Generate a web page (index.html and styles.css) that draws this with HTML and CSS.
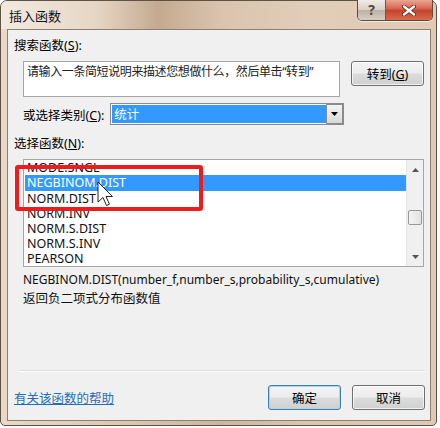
FILE: index.html
```html
<!DOCTYPE html>
<html lang="zh-CN">
<head>
    <meta charset="UTF-8">
    <title>插入函数</title>
    <link rel="stylesheet" href="styles.css">
</head>
<body>
    <div class="window">
        <div class="titlebar">
            <span class="title">插入函数</span>
            <div class="caption-buttons">
                <div class="cap-help">?</div>
                <div class="cap-close">
                    <svg width="14" height="11" viewBox="0 0 14 11"><path d="M2 1.5 L12 9.5 M12 1.5 L2 9.5" stroke="#5a2418" stroke-width="4" stroke-linecap="round"/><path d="M2 1.5 L12 9.5 M12 1.5 L2 9.5" stroke="#fff" stroke-width="2.4" stroke-linecap="round"/></svg>
                </div>
            </div>
        </div>
        <div class="client">
            <div class="label top-label">搜索函数(<u>S</u>):</div>
            <div class="search-row">
                <div class="search-box">请输入一条简短说明来描述您想做什么，然后单击“转到”</div>
                <button class="btn go-btn">转到(<u>G</u>)</button>
            </div>
            <div class="category-row">
                <span class="label">或选择类别(<u>C</u>):</span>
                <div class="select">
                    <span class="select-value">统计</span>
                    <span class="select-arrow">
                        <svg width="7" height="4" viewBox="0 0 7 4"><path d="M0 0 H7 L3.5 4 Z" fill="#000"/></svg>
                    </span>
                </div>
            </div>
            <div class="label list-label">选择函数(<u>N</u>):</div>
            <div class="listbox">
                <div class="items">
                    <div class="item">MODE.SNGL</div>
                    <div class="item selected">NEGBINOM.DIST</div>
                    <div class="item">NORM.DIST</div>
                    <div class="item">NORM.INV</div>
                    <div class="item">NORM.S.DIST</div>
                    <div class="item">NORM.S.INV</div>
                    <div class="item">PEARSON</div>
                </div>
                <div class="scrollbar">
                    <svg width="7" height="4" viewBox="0 0 7 4"><path d="M0 4 H7 L3.5 0 Z" fill="#555"/></svg>
                    <div class="thumb"></div>
                    <svg width="7" height="4" viewBox="0 0 7 4"><path d="M0 0 H7 L3.5 4 Z" fill="#555"/></svg>
                </div>
            </div>
            <div class="details">
                <div class="signature">NEGBINOM.DIST(number_f,number_s,probability_s,cumulative)</div>
                <div class="description">返回负二项式分布函数值</div>
            </div>
            <div class="separator"></div>
            <div class="bottom-row">
                <a href="#" class="help-link">有关该函数的帮助</a>
                <div class="buttons">
                    <button class="btn default-btn">确定</button>
                    <button class="btn">取消</button>
                </div>
            </div>
        </div>

        <!-- annotation drawn over the screenshot -->
        <div class="highlight-box"></div>
        <svg class="cursor" width="20" height="30" viewBox="0 0 20 30">
            <path d="M1 1 L1 21 L6 16.5 L9.5 24.5 L12.5 23.2 L9 15.5 L15.5 15.5 Z" fill="#fff" stroke="#222" stroke-width="1" stroke-linejoin="round"/>
        </svg>
    </div>
</body>
</html>
```

FILE: styles.css
```css
body {
    margin: 0;
    background-color: #fff;
    font-family: "Noto Sans", "Noto Sans CJK SC", sans-serif;
    font-size: 12.5px;
    color: #000;
}
.window {
    position: relative;
    width: 437px;
    height: 426px;
    box-sizing: border-box;
    border: 1px solid #5e5247;
    border-radius: 7px 7px 5px 5px;
    background: linear-gradient(90deg, #e8d9ca 0%, #dcc6b0 30%, #cfb59b 50%, #dcc6b0 70%, #e0c9b2 100%);
    padding: 0 5px 4px 6px;
    display: flex;
    flex-direction: column;
}
.titlebar {
    height: 28px;
    flex-shrink: 0;
    display: flex;
    align-items: flex-start;
    background: linear-gradient(90deg, rgba(245, 238, 230, 0.75) 0%, rgba(240, 228, 215, 0.4) 22%, rgba(150, 115, 85, 0.3) 36%, rgba(240, 228, 215, 0.3) 50%, rgba(225, 205, 185, 0.4) 100%);
    margin: 0 -5px 0 -6px;
    padding: 0 5px 0 6px;
    border-radius: 6px 6px 0 0;
}
.title {
    font-family: "Noto Sans CJK SC", sans-serif;
    font-size: 13px;
    line-height: 30px;
    padding-left: 2px;
    color: #111;
}
.caption-buttons {
    margin-left: auto;
    margin-right: -2px;
    margin-top: -1px;
    display: flex;
    height: 20px;
    border: 1px solid #5a4c40;
    border-top: none;
    border-radius: 0 0 5px 5px;
    overflow: hidden;
    box-shadow: 0 1px 0 rgba(255, 255, 255, 0.6);
}
.cap-help {
    width: 27px;
    background: linear-gradient(#f1ebe5 0%, #d8cfc6 50%, #bdb1a6 51%, #d7cdc3 100%);
    color: #4a4a4a;
    font-weight: bold;
    font-size: 14px;
    text-align: center;
    line-height: 19px;
    border-right: 1px solid #6b5a4b;
}
.cap-close {
    width: 46px;
    background: linear-gradient(#eaa693 0%, #d7614b 45%, #c4432c 52%, #d96a4c 100%);
    display: flex;
    align-items: center;
    justify-content: center;
}
.client {
    flex: 1;
    background-color: #f0f0f0;
    border: 1px solid #8d7f72;
    padding: 0 5px 0 6px;
    display: flex;
    flex-direction: column;
    box-sizing: border-box;
}
.label {
    font-family: "Noto Sans", "Noto Sans CJK SC", sans-serif;
    font-size: 12.5px;
}
.top-label {
    margin-top: 8px;
    line-height: 16px;
}
.search-row {
    display: flex;
    align-items: flex-start;
    margin-top: 7px;
    padding-left: 9px;
}
.search-box {
    width: 317px;
    height: 36px;
    flex-shrink: 0;
    box-sizing: border-box;
    background: #fff;
    border: 1px solid #a6a6a6;
    padding: 2px 3px;
    font-family: "Noto Sans", "Noto Sans CJK SC", sans-serif;
    font-size: 12px;
    letter-spacing: -0.4px;
    line-height: 16px;
    color: #222;
    white-space: nowrap;
}
.btn {
    width: 73px;
    height: 25px;
    flex-shrink: 0;
    border: 1px solid #707070;
    border-radius: 3px;
    background: linear-gradient(#f4f4f4 0%, #ececec 48%, #dcdcdc 52%, #d0d0d0 100%);
    font-family: "Noto Sans", "Noto Sans CJK SC", sans-serif;
    font-size: 12.5px;
    color: #000;
    padding: 0;
    box-shadow: inset 0 0 0 1px rgba(255, 255, 255, 0.7);
}
.go-btn {
    margin-left: 11px;
}
.category-row {
    display: flex;
    align-items: center;
    margin-top: 6px;
    padding-left: 9px;
}
.select {
    margin-left: 6px;
    width: 234px;
    height: 22px;
    box-sizing: border-box;
    border: 1px solid #8a8a8a;
    background: #fff;
    display: flex;
    padding: 1px;
}
.select-value {
    flex: 1;
    background: #3399ff;
    color: #fff;
    font-family: "Noto Sans CJK SC", sans-serif;
    font-size: 12.5px;
    line-height: 18px;
    padding-left: 2px;
}
.select-arrow {
    width: 15px;
    margin: -1px -1px -1px 0;
    border: 1px solid #8a8a8a;
    background: linear-gradient(#f4f4f4, #d8d8d8);
    display: flex;
    align-items: center;
    justify-content: center;
}
.list-label {
    margin-top: 11px;
    line-height: 16px;
}
.listbox {
    margin: 7px 0 0 9px;
    width: 401px;
    height: 108px;
    flex-shrink: 0;
    box-sizing: border-box;
    border: 1px solid #a6a6a6;
    background: #fff;
    display: flex;
    overflow: hidden;
}
.items {
    flex: 1;
    padding-left: 1px;
}
.item {
    height: 15px;
    line-height: 15px;
    padding-left: 2px;
    font-size: 12.5px;
    color: #111;
}
.item.selected {
    height: 16px;
    line-height: 16px;
    background: #3399ff;
    color: #fff;
}
.scrollbar {
    width: 17px;
    background: #f0f0f0;
    border-left: 1px solid #e6e6e6;
    display: flex;
    flex-direction: column;
    align-items: center;
    padding: 8px 0 7px;
    box-sizing: border-box;
}
.thumb {
    width: 14px;
    height: 15px;
    box-sizing: border-box;
    border: 1px solid #989898;
    border-radius: 2px;
    background: linear-gradient(90deg, #f4f4f4, #e2e2e2);
    margin: 38px 0 auto;
}
.details {
    padding-left: 9px;
    margin-top: 5px;
}
.signature {
    line-height: 16px;
    font-size: 12px;
    color: #111;
}
.description {
    margin-top: 1px;
    font-family: "Noto Sans CJK SC", sans-serif;
    font-size: 12.5px;
    line-height: 18px;
    color: #111;
}
.separator {
    margin-top: auto;
    height: 1px;
    background: #dcdcdc;
    border-bottom: 1px solid #fff;
    margin-left: 5px;
}
.bottom-row {
    display: flex;
    align-items: center;
    height: 25px;
    margin-top: 13px;
    margin-bottom: 10px;
}
.help-link {
    font-family: "Noto Sans CJK SC", sans-serif;
    font-size: 12.5px;
    color: #1f6fb5;
}
.buttons {
    margin-left: auto;
    display: flex;
    gap: 11px;
}
.default-btn {
    border-color: #3c7fb1;
    box-shadow: inset 0 0 0 1px #a6d6f2;
}
.highlight-box {
    position: absolute;
    left: 14px;
    top: 164px;
    width: 188px;
    height: 46px;
    box-sizing: border-box;
    border: 4px solid #ee1c1c;
    border-radius: 3px;
}
.cursor {
    position: absolute;
    left: 96px;
    top: 180px;
}
```
